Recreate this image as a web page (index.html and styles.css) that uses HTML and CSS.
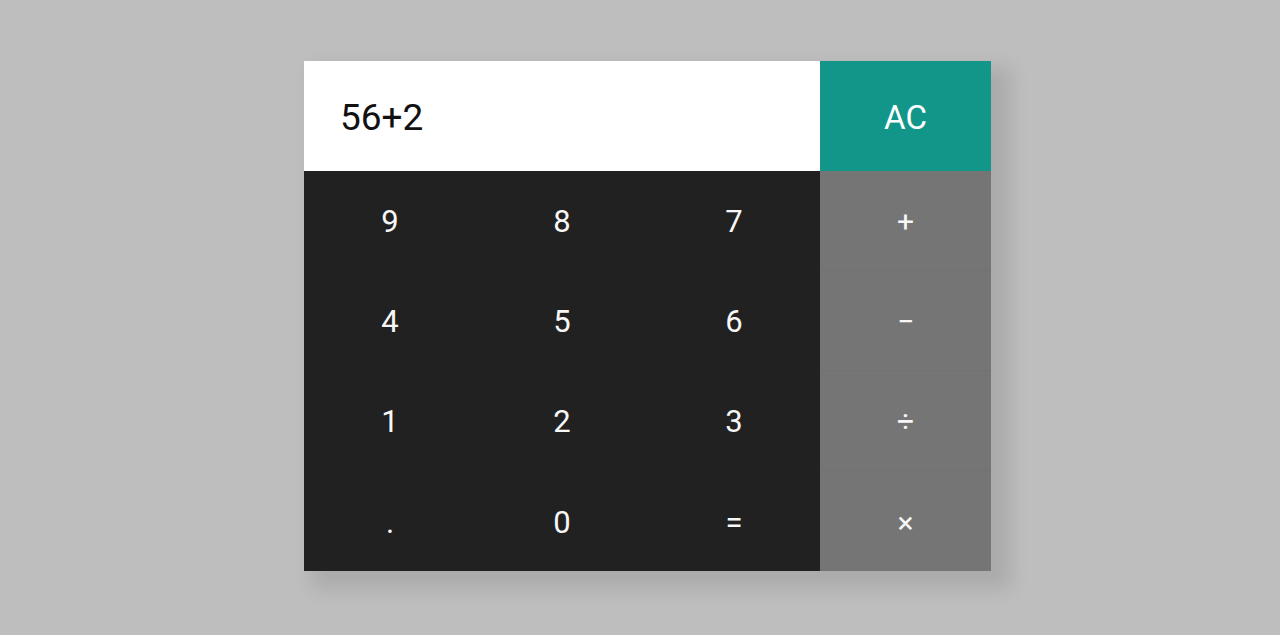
FILE: index.html
```html
<!DOCTYPE html>
<html>
<head>
  <meta charset="UTF-8">
  <meta name="viewport" content="width=device-width, initial-scale=1.0">
  <title>Calculator</title>
  <link rel="stylesheet" href="styles.css">
</head>
<body>

  <div class="calculator">
    <div class="display">56+2</div>
    <button class="key clear">AC</button>

    <button class="key num">9</button>
    <button class="key num">8</button>
    <button class="key num">7</button>
    <button class="key op">+</button>

    <button class="key num">4</button>
    <button class="key num">5</button>
    <button class="key num">6</button>
    <button class="key op">&minus;</button>

    <button class="key num">1</button>
    <button class="key num">2</button>
    <button class="key num">3</button>
    <button class="key op">&divide;</button>

    <button class="key num">.</button>
    <button class="key num">0</button>
    <button class="key num">=</button>
    <button class="key op">&times;</button>
  </div>

</body>
</html>
```

FILE: styles.css
```css
:root {
  font: 100%/1.2 Roboto, "Noto Sans", sans-serif;
  background: #bebebe;
}

body {
  margin: 0;
  padding: 61px 0 40px 15px;
  min-height: 635px;
  box-sizing: border-box;
}

.calculator {
  margin: 0 auto;
  display: grid;
  grid-template-columns: 172px 172px 172px 171px;
  grid-template-rows: 110px repeat(4, 100px);
  width: 687px;
  box-shadow: 14px 12px 18px 6px rgba(0, 0, 0, 0.1);
}

.display {
  grid-column: span 3;
  display: flex;
  align-items: center;
  padding: 4px 36px 0;
  background: #fff;
  color: #111;
  font-size: 37px;
}

.key {
  margin: 0;
  padding: 3px 0 0;
  border: 0;
  font: inherit;
  font-size: 31px;
  color: #f7f7f7;
  cursor: pointer;
}

  .key.num {
    background: #212121;
    border-bottom: 1px solid #232323;
  }

  .key.op {
    background: #757575;
    border-bottom: 1px solid #727272;
    font-size: 30px;
  }

  .key.clear {
    background: #13968a;
    font-size: 33px;
    color: #fff;
  }

  .calculator .key:nth-last-child(-n+4) {
    border-bottom: 0;
  }
```
